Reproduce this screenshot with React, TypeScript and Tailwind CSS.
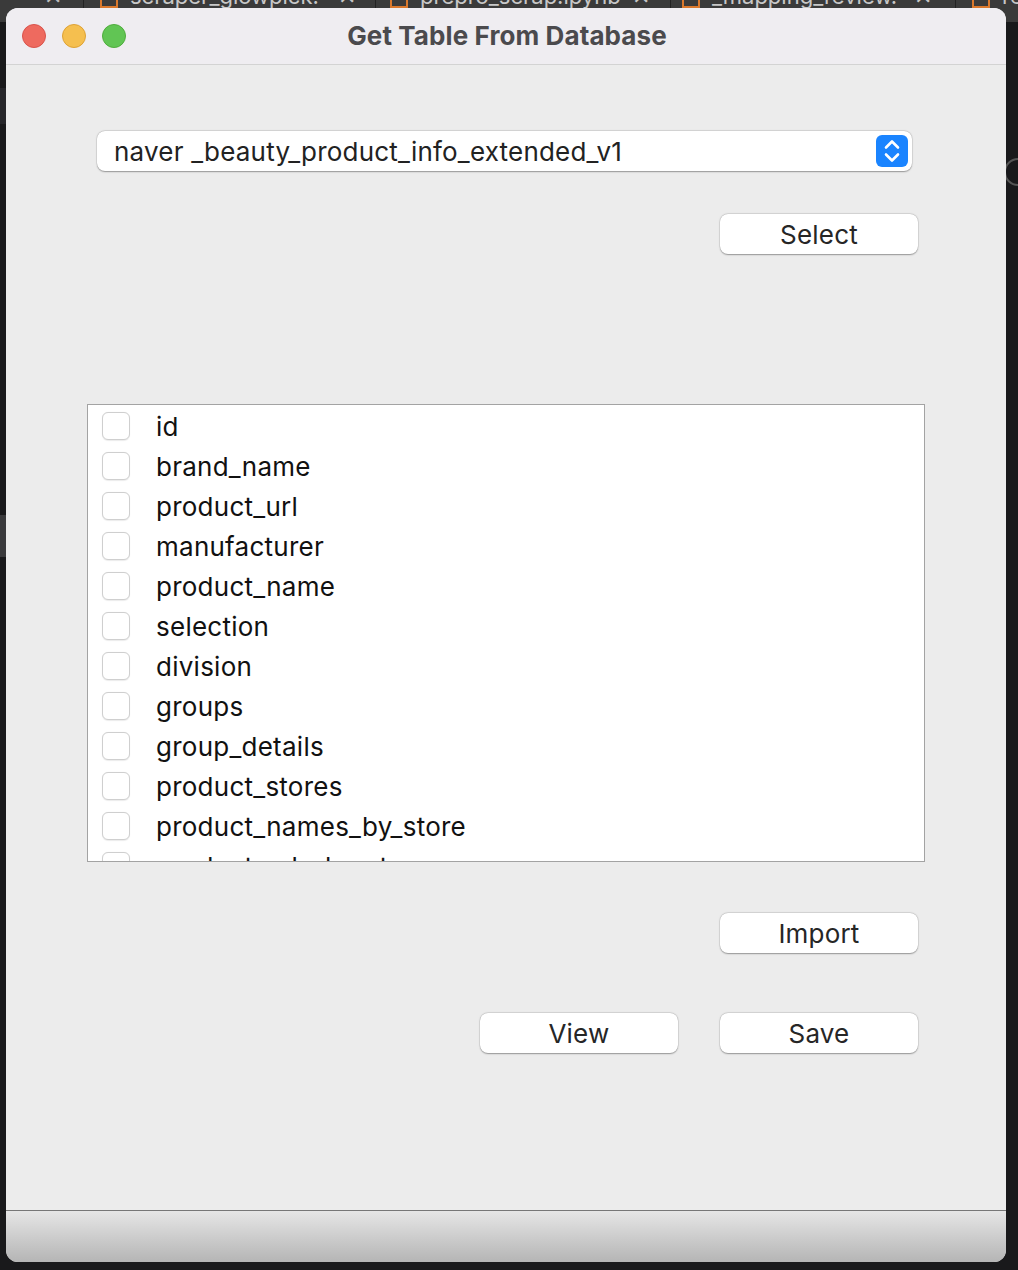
import React from "react";

const fields = [
  "id",
  "brand_name",
  "product_url",
  "manufacturer",
  "product_name",
  "selection",
  "division",
  "groups",
  "group_details",
  "product_stores",
  "product_names_by_store",
  "product_urls_by_store",
];

function Tab({ label, left, x }: { label: string; left: number; x?: number }) {
  return (
    <div className="absolute top-0 h-[22px]" style={{ left }}>
      <div className="absolute left-0 top-[-4px] h-[12px] w-[18px] border-2 border-[#d9782d]" />
      <span className="absolute left-[30px] top-[-18px] whitespace-nowrap text-[22px] leading-[28px] text-[#c8c8c8]">
        {label}
      </span>
      {x !== undefined && (
        <span className="absolute top-[-18px] text-[22px] leading-[28px] text-[#c8c8c8]" style={{ left: x }}>
          ✕
        </span>
      )}
    </div>
  );
}

function MacButton({ label, className = "" }: { label: string; className?: string }) {
  return (
    <button
      className={
        "flex h-[40px] w-[198px] items-center justify-center rounded-[8px] bg-white text-[26px] tracking-[0.2px] text-[#262626] shadow-[0_0.5px_1.5px_rgba(0,0,0,0.35),0_0_0_0.5px_rgba(0,0,0,0.08)] " +
        className
      }
    >
      {label}
    </button>
  );
}

export default function App() {
  return (
    <div
      className="relative h-[1270px] w-[1018px] overflow-hidden bg-[#19191b]"
      style={{ fontFamily: "Inter, 'Noto Sans', 'Liberation Sans', sans-serif" }}
    >
      {/* background IDE tab strip */}
      <div className="absolute left-0 top-0 h-[22px] w-full bg-[#3a3a3a]">
        <span className="absolute left-[44px] top-[-18px] text-[22px] leading-[28px] text-[#bdbdbd]">✕</span>
        <div className="absolute left-[83px] top-0 h-[22px] w-px bg-[#222]" />
        <Tab label="scraper_glowpick." left={100} x={238} />
        <div className="absolute left-[375px] top-0 h-[22px] w-px bg-[#222]" />
        <Tab label="prepro_scrap.ipynb" left={390} x={242} />
        <div className="absolute left-[670px] top-0 h-[22px] w-px bg-[#222]" />
        <Tab label="_mapping_review." left={682} x={232} />
        <div className="absolute left-[955px] top-0 h-[22px] w-px bg-[#222]" />
        <Tab label="re" left={972} />
      </div>
      <div className="absolute left-0 top-[88px] h-[36px] w-[6px] bg-[#26262a]" />
      <div className="absolute left-0 top-[515px] h-[42px] w-[6px] bg-[#3a3a3c]" />
      <div className="absolute right-[-14px] top-[158px] h-[28px] w-[28px] rounded-full border-2 border-[#555]" />

      {/* window */}
      <div className="absolute left-[6px] top-[8px] flex h-[1254px] w-[1000px] flex-col overflow-hidden rounded-[12px] bg-[#ececec]">
        {/* title bar */}
        <div className="relative flex h-[57px] shrink-0 items-center justify-center border-b border-[#d3d3d3] bg-[#efedf1]">
          <div className="absolute left-[16px] top-[16px] flex gap-[16px]">
            <div className="h-[24px] w-[24px] rounded-full border border-[#d9534c] bg-[#ee6a5f]" />
            <div className="h-[24px] w-[24px] rounded-full border border-[#dea235] bg-[#f5bf4f]" />
            <div className="h-[24px] w-[24px] rounded-full border border-[#4fad3d] bg-[#61c554]" />
          </div>
          <span className="ml-[2px] mt-[-1px] text-[26px] font-bold tracking-[0.1px] text-[#4b4a4d]">
            Get Table From Database
          </span>
        </div>

        {/* content */}
        <div className="flex flex-1 flex-col">
          {/* combo box */}
          <div className="ml-[91px] mr-[94px] mt-[66px] flex h-[40px] items-center rounded-[8px] bg-white pl-[17px] pr-[4px] shadow-[0_0.5px_1.5px_rgba(0,0,0,0.35),0_0_0_0.5px_rgba(0,0,0,0.08)]">
            <span className="flex-1 pt-[1px] text-[26px] tracking-[0.2px] text-[#222]">
              naver _beauty_product_info_extended_v1
            </span>
            <div className="flex h-[32px] w-[32px] items-center justify-center rounded-[6px] bg-[#1a84ff]">
              <svg width="20" height="26" viewBox="0 0 20 26" fill="none">
                <path d="M4 9.5 L10 3.5 L16 9.5" stroke="white" strokeWidth="2.6" strokeLinecap="round" strokeLinejoin="round" />
                <path d="M4 16.5 L10 22.5 L16 16.5" stroke="white" strokeWidth="2.6" strokeLinecap="round" strokeLinejoin="round" />
              </svg>
            </div>
          </div>

          <MacButton label="Select" className="mr-[88px] mt-[43px] self-end" />

          {/* list */}
          <div className="ml-[81px] mr-[81px] mt-[150px] h-[458px] overflow-hidden border border-[#a3a3a3] bg-white pl-[14px] pt-[1px]">
            {fields.map((f) => (
              <div key={f} className="flex h-[40px] items-center">
                <div className="h-[28px] w-[28px] shrink-0 rounded-[6px] border border-[#cfcfcf] bg-white shadow-[0_0.5px_1px_rgba(0,0,0,0.08)]" />
                <span className="ml-[26px] text-[26px] tracking-[0.25px] text-[#111]">{f}</span>
              </div>
            ))}
          </div>

          <MacButton label="Import" className="mr-[88px] mt-[51px] self-end" />

          <div className="mr-[88px] mt-[60px] flex justify-end gap-[42px]">
            <MacButton label="View" />
            <MacButton label="Save" />
          </div>
        </div>

        {/* bottom bar */}
        <div className="h-[52px] shrink-0 border-t border-[#777] bg-gradient-to-b from-[#e6e6e6] to-[#b5b5b5]" />
      </div>
    </div>
  );
}
